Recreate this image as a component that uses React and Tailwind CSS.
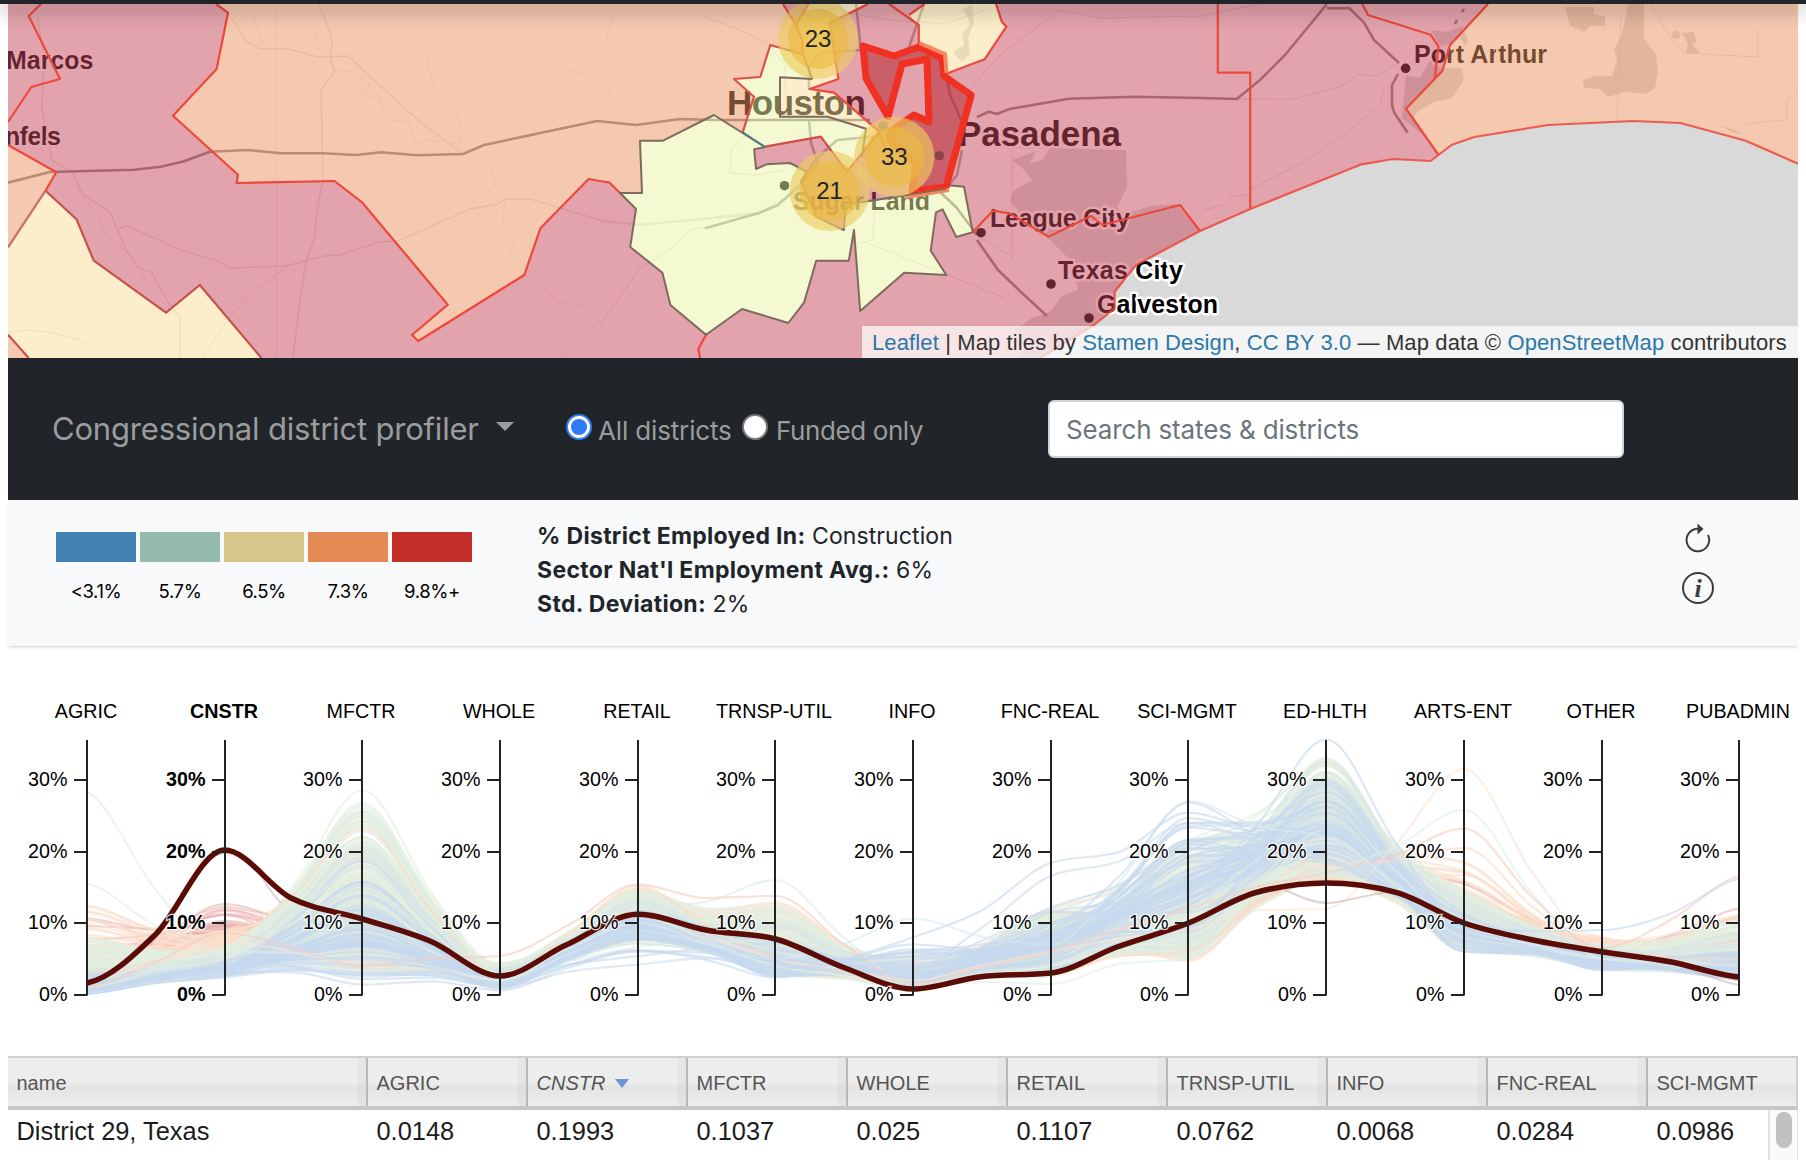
import React from "react";

const SANS = "font-['Liberation_Sans',Arial,sans-serif]";

/* ------------------------------- map ------------------------------- */

const FILL = {
  rose: "#c8485a",
  peach: "#eb9362",
  cream: "#fadd98",
  lime: "#e9f3a3",
};

const coast =
  "1040,358 1094,325 1114.7,308.3 1114.7,291.7 1136,265 1200,231 1250.2,209 1360.4,164.7 1393,159 1430.7,161 1438.5,155";
const gulfCoast = "1438.5,155 1452,144.7 1474.4,137 1548,125 1633,121 1680.4,123 1745.7,140.7 1798,163.7";
const westEdge =
  "216,4 228,12.7 216.6,69 173,115.7 238,174.7 236.5,183 334.5,181 362.4,202.7 447.8,304.7 412,335 418.3,341 524.3,275 540.4,228.3 588.6,179 600,181 609.6,182.7 620,193";
const limeSouth =
  "642,193 640,140.7 663,140.7 714,115 765,147 754.2,149.3 756,169 766.5,164.3 790,163 806.7,171.7 801,181.7 816,216.7 843.8,230 846,205 864,201.7 946,189 945.6,185 964,186.7 972.7,232.3 956.3,237 942.5,209.3 936,212.3 930.7,250.7 946.3,275 904.2,272.7 860.2,311 854,230 848.8,260.7 816.2,260.7 804,302.7 788.3,323 742,309 706,334.7 670.4,305 662.4,272.7 630.2,247 636,209 620,193";
const limeNorth =
  "770.3,45 803,54.3 812.4,79 780,77.3 780,116.7 827.7,116.7 866,128.7 862,157 845,172 820.8,136.7 765.3,146.7 742.7,132.3 754,96.7 734,79 760.3,77";
const creamCity =
  "808.6,4 796,25 802,40 803,54.3 812.4,79 780,77.3 780,116.7 827.7,116.7 866,128.7 862,157 847,171.7 879.4,131.7 834,92.7 809.7,89 838.4,79 829.6,23 868,4";
const creamNorth =
  "924.5,4 909,15 918.8,25 918.8,45 944.4,56 945.6,74 984.6,59.3 1006.4,26.7 1001.8,21.7 996,4";
const creamWest = "45.5,190.7 76.5,219.3 93.8,260.7 166,312.7 199.8,285 261.4,358 28.7,358 8,334.7 8,247.3";
const selected =
  "M863 46 894 56 918.8 47 942 58 944 76 971.2 95 946 187 912 191 915.7 163 889 140 891 131 913.8 115 929 121.7 927 59 902 64 888 116.7 866 78.3Z";

const roseArea =
  "M8 4H216L228 12.7 216.6 69 173 115.7 238 174.7 236.5 183 334.5 181 362.4 202.7 447.8 304.7 412 335 418.3 341 524.3 275 540.4 228.3 588.6 179 609.6 182.7 620 193 636 209 630.2 247 662.4 272.7 670.4 305 706 334.7 742 309 788.3 323 804 302.7 816.2 260.7 848.8 260.7 854 230 860.2 311 904.2 272.7 946.3 275 930.7 250.7 936 212.3 942.5 209.3 956.3 237 972.7 232.3 964 186.7 945.6 185 971.2 95 945.6 74 984.6 59.3 1006.4 26.7 1001.8 21.7 996 4H1488L1450 45 1442.3 71 1406 108.7 1438.5 155 1430.7 161 1393 159 1360.4 164.7 1250.2 209 1200 231 1136 265 1114.7 291.7 1114.7 308.3 1094 325 1040 358H261.4L199.8 285 166 312.7 93.8 260.7 76.5 219.3 45.5 190.7 56.3 172.3 8 145Z";

const CITIES = [
  { name: "Marcos", x: 6, y: 69.3, w: 87.5, s: 25 },
  { name: "nfels", x: 5, y: 145, w: 56, s: 25 },
  { name: "Houston", x: 727, y: 115, w: 139, s: 35 },
  { name: "Pasadena", x: 958, y: 145.7, w: 163, s: 35 },
  { name: "Sugar Land", x: 793, y: 210, w: 137, s: 25 },
  { name: "League City", x: 990, y: 227, w: 140, s: 25 },
  { name: "Texas City", x: 1058, y: 278.7, w: 125, s: 25 },
  { name: "Galveston", x: 1097, y: 313.3, w: 121, s: 25 },
  { name: "Port Arthur", x: 1414, y: 62.7, w: 133, s: 25 },
];
const DOTS = [[784.5, 185.7], [981, 232.7], [1051, 284], [1089, 318], [1405.6, 68.3]];
const CLUSTERS = [
  { n: 23, x: 818, y: 39 },
  { n: 33, x: 894.3, y: 156.7 },
  { n: 21, x: 829.6, y: 191 },
];

function DistrictMap() {
  return (
    <svg className="block h-full w-full" viewBox="8 4 1790 354">
      <rect x="8" y="4" width="1790" height="354" fill="#fff" />
      {/* water */}
      <polygon points={`${coast} ${gulfCoast} 1798,358`} fill="#d9d9d9" />
      <g fill="#d9d9d9">
        <path d="M1012 160 1036 151 1030 163 1042 160 1050 148 1126 150 1127 187 1117 208 1125 214 1150 206 1176 204 1200 231 1136 265 1115 292 1115 308 1094 325 1040 358H1018L1026 340 1015 330 1032 318 1050 312 1062 296 1078 290 1072 262 1050 240 1020 213 1010 201 1014 190 1032 180 1024 170Z" />
        <path d="M955 50 964 46 962 34 970 24 966 14 962 10 972 4 974 22 968 38 970 54 962 62 954 54Z" />
        <path d="M1406 75 1420 78 1430 60 1440 68 1462 68 1464 80 1452 98 1434 102 1420 110 1414 116 1424 136 1402 118Z" />
        <path d="M1431 30 1448 32 1462 26 1468 40 1466 46 1460 38 1450 44 1440 46Z" />
        <path d="M1565 7H1594L1594 14 1605 16 1605 26 1590 26 1584 32 1570 26Z" />
        <path d="M1628 4H1644L1644 38 1656 55 1658 72 1655 88 1646 94 1625 92 1608 97 1600 89 1584 88 1583 80 1596 76 1612 76 1617 60 1614 50 1622 34Z" />
        <circle cx="1676" cy="35" r="4" />
        <path d="M1682 33 1694 32 1697 42 1692 44 1700 53 1686 53 1688 44Z" />
        <path d="M1720 125 1742 133 1740 134 1732 132Z" />
      </g>
      {/* minor roads and streams */}
      <g fill="none" stroke="#b9b3b0" strokeWidth="1" opacity=".4">
        <path d="M231 17 247 42 260 49H288L318 57 348 56 365 72 420 122 462 153" strokeWidth="1.3" />
        <path d="M319 4 332 38 331 62 335 71 321 90 323 180 318 205 314 240 306 262 300 300 293 358" strokeWidth="1.3" />
        <path d="M37 12 44 60 42 108 52 160 72 172 84 195 110 212 121 238 126 250 138 268 151 272 168 302 180 318V358" strokeWidth="1.3" />
        <path d="M120 228 128 226 180 250 218 261 230 268 286 266 325 256 340 255 380 242 398 241 470 209 498 204 506 199H530L600 220 640 225 760 214" strokeWidth="1.3" />
        <path d="M288 266 264 284 234 312 202 358M8 333 24 330 50 332 80 340 100 358" />
        <g opacity=".6">
          <path d="M240 20 252 12 258 30 262 43 272 34 282 43 296 34 300 41 316 34 318 48 328 52 334 70 352 72 370 85 362 95 380 97 382 110 390 120 408 122 416 143 430 140 458 144 462 134 456 110 440 98 432 80 425 50" />
          <path d="M474 155 488 164 496 185 486 195 505 205 502 225 514 245 508 260 525 275 540 285 548 290 556 302 580 305 600 320 575 340 564 358" />
          <path d="M72 180 86 200 98 214 104 234 120 246 138 262 144 280 156 300 M186 190 190 196M536 50 560 68 580 74 600 82" />
          <path d="M277 4V358M604 4 612 20 606 40 618 58 604 80 610 95 622 104" />
        </g>
        <path d="M700 15 740 30 766 42 785 65 786 112M784 170 757 175 730 173 731 150 752 130M600 222 640 224 668 222 760 212 800 190M600 325 640 268 672 248 690 230 720 225" />
        <path d="M860 15 890 20 945 24 985 10M966 95 986 70 1000 55 1060 10 1100 18 1200 16 1260 4M870 244 1005 298M856 244 873 240 875 195M1043 148H1012V260M960 226 1010 255" />
        <path d="M1228 99H1294L1342 86 1358 74 1376 76 1396 64M1250 190 1310 158 1350 130 1380 105 1384 90M1204 210 1224 205 1232 196 1250 195" />
        <path d="M1621 14 1617 124M1650 4 1660 18 1664 28 1684 53 1758 57V28M1798 90 1786 100 1787 120 1760 122 1740 126" />
      </g>
      {/* main roads */}
      <g fill="none" stroke="#8c8583" strokeWidth="2.6" strokeLinejoin="round">
        <path d="M8 182.7 50 172 134 169.7 161 166.7 184 161.3 210 151.7 248 150 281 153.3H323L356 155 381 152.3 417 155.3 463 154 484 145 597 121 636 125 680 119 715 120H870" />
        <path d="M977 117 989 111.7 997 114 1009.5 109 1069 98.7 1136 96.7 1200 98 1236.7 99 1260 80 1285 55 1327 4M1327 8.3H1349.6L1364 22.7 1374 40 1399 63M1398 74 1392 85V105L1394.4 113 1407.6 132.7" />
        <g opacity=".75">
          <path d="M856 4 861 50 820 52.7 809 66V90M809 120 811 143 818 163 800 185M705 228.3 759 213 778 205 800 185 815 160 837 140 881 136M924 4 908 50M962 150 957 175 945 190M945 70 950 95 962 122" />
        </g>
        <path d="M941 193 956 207 977 235M977 240 998 270 1021 292 1047 316" />
        <path d="M1462 12 1464 9M1455 24 1457 20" />
      </g>
      {/* place names */}
      <g fill="#000">
        {DOTS.map(([x, y]) => (
          <circle key={x} cx={x} cy={y} r="4.8" />
        ))}
        {CITIES.map((c) => (
          <text
            key={c.name}
            x={c.x}
            y={c.y}
            fontSize={c.s}
            textLength={c.w}
            fontWeight="700"
            stroke="#fff"
            strokeWidth="5"
            strokeLinejoin="round"
            paintOrder="stroke"
            className={SANS}
          >
            {c.name}
          </text>
        ))}
      </g>
      {/* district fills */}
      <g fillOpacity=".5">
        <path fill={FILL.rose} d={roseArea} />
        <polygon points="8,145 56.3,172.3 45.5,190.7 8,247.3" fill={FILL.peach} />
        <polygon points="8,334.7 28.7,358 8,358" fill={FILL.peach} />
        <polygon points={creamWest} fill={FILL.cream} />
        <polygon
          points={`${westEdge} 642,193 640,140.7 663,140.7 714,115 742.7,132.3 754,96.7 734,79 760.3,77 770.3,45 803,54.3 796,25 783,4`}
          fill={FILL.peach}
        />
        <polygon points={limeNorth} fill={FILL.lime} />
        <polygon points={limeSouth} fill={FILL.lime} />
        <polygon points={creamCity} fill={FILL.cream} />
        <polygon points={creamNorth} fill={FILL.cream} />
        <polygon points="783,4 808.6,4 796,25" fill={FILL.rose} />
        <path
          fill={FILL.rose}
          d="M868 4H924.5L909 15 918.8 25V45L944.4 56 945.6 74 971.2 95 946 189 864 201.7 846 205 843.8 230 816 216.7 801 181.7 806.7 171.7 790 163 766.5 164.3 756 169 754.2 149.3 820.8 136.7 847 171.7 879.4 131.7 834 92.7 809.7 89 838.4 79 829.6 23Z"
        />
        <polygon
          points={`1488,4 1450,45 1442.3,71 1406,108.7 ${gulfCoast} 1798,4`}
          fill={FILL.peach}
        />
      </g>
      {/* district borders */}
      <g fill="none" stroke="#ec483b" strokeWidth="2.2" strokeLinejoin="round">
        <polyline points="41,4 28.7,16 60,79 31.4,87 8,122" />
        <polyline points={westEdge} />
        <polyline points="8,145 56.3,172.3 45.5,190.7" />
        <polyline points="45.5,190.7 8,247.3" stroke="#c7706a" />
        <polyline points="45.5,190.7 76.5,219.3 93.8,260.7 166,312.7 199.8,285 261.4,358" stroke="#c8504a" />
        <polyline points="8,334.7 28.7,358" stroke="#c8504a" />
        <polyline points="808.6,4 796,25" />
        <polyline points="803,54.3 802,40 796,25 783,4" />
        <polyline points="847,171.7 879.4,131.7 834,92.7 809.7,89 838.4,79 829.6,23 868,4" />
        <polyline
          points="803,54.3 770.3,45 760.3,77 734,79 754,96.7 742.7,132.3"
          stroke="#dc5045"
        />
        <polyline points="765.3,146.7 820.8,136.7 847,171.7" stroke="#d54a45" />
        <polyline points="879.4,131.7 885,150" />
        <polyline points="889,4 918.8,25 918.8,45" />
        <polyline points="924.5,4 909,15" />
        <polyline points="945.6,74 984.6,59.3 1006.4,26.7 1001.8,21.7 996,4" />
        <polyline points={coast} opacity=".85" />
        <polyline points={gulfCoast} opacity=".85" />
        <polyline points="1488,4 1450,45 1442.3,71 1406,108.7 1438.5,155" />
        <polyline points="1362.3,4 1368,15 1430.7,34.7 1438.5,46.7 1434.6,78.3" />
        <polyline points="1217.8,4 1217.8,72.7 1250.2,72.7 1250.2,209" />
        <polyline points="972.7,232.3 993,210.7 1009.5,213.3 1048.5,236.7 1091,216 1102.5,225 1180,205 1200,231" />
        <polyline points="706,334.7 698.4,348.7 700,358" />
      </g>
      <g fill="none" stroke="#7f6a5f" strokeWidth="2" strokeLinejoin="round">
        <polygon points={limeSouth} />
        <polyline points="812.4,79 780,77.3 780,116.7 827.7,116.7 866,128.7 862,157" />
        <polyline points="803,54.3 812.4,79" />
      </g>
      <path d="M742.7 132.3 765 147" stroke="#4a7f86" strokeWidth="2" />
      {/* selected district */}
      <path d={selected} fill="#b01520" fillOpacity=".48" stroke="#f03122" strokeWidth="7" strokeLinejoin="round" />
      <path d="M919.5 43 945 54 946.5 73M906 197 949 190" fill="none" stroke="#f48a62" strokeWidth="4" />
      <path d="M864 201.7 946 189" stroke="#7f6a5f" strokeWidth="1.6" />
      <g fill="#000" fillOpacity=".3">
        <circle cx="883" cy="125.7" r="4.8" />
        <circle cx="939.4" cy="155.7" r="4.8" />
      </g>
      {CLUSTERS.map((c) => (
        <g key={c.n}>
          <circle cx={c.x} cy={c.y} r="40" fill="#edcc62" fillOpacity=".65" />
          <circle cx={c.x} cy={c.y} r="30" fill="#ebbb3e" fillOpacity=".6" />
          <text x={c.x} y={c.y + 8} fontSize="24" fill="#212529" textAnchor="middle" className={SANS}>
            {c.n}
          </text>
        </g>
      ))}
    </svg>
  );
}

/* ----------------------- parallel coordinates ---------------------- */

const AXES = [
  "AGRIC", "CNSTR", "MFCTR", "WHOLE", "RETAIL", "TRNSP-UTIL", "INFO",
  "FNC-REAL", "SCI-MGMT", "ED-HLTH", "ARTS-ENT", "OTHER", "PUBADMIN",
];
const axisX = (i) => 87 + 137.7 * i;
const valueY = (v) => 994.6 - 7.16 * v;

function monotonePath(pts) {
  const n = pts.length;
  const d = [];
  for (let i = 0; i < n - 1; i++) d.push((pts[i + 1][1] - pts[i][1]) / (pts[i + 1][0] - pts[i][0]));
  const m = pts.map((_, i) => {
    if (i === 0) return d[0] * 0.3;
    if (i === n - 1) return d[n - 2] * 0.4;
    const a = d[i - 1];
    const b = d[i];
    if (a * b <= 0) return 0;
    return Math.sign(a) * Math.min(Math.abs(a) * 2, Math.abs(b) * 2, Math.abs(a + b) / 2);
  });
  let s = `M${pts[0][0].toFixed(1)} ${pts[0][1].toFixed(1)}`;
  for (let i = 0; i < n - 1; i++) {
    const h = (pts[i + 1][0] - pts[i][0]) / 3;
    s += `C${(pts[i][0] + h).toFixed(1)} ${(pts[i][1] + m[i] * h).toFixed(1)} ${(pts[i + 1][0] - h).toFixed(1)} ${(pts[i + 1][1] - m[i + 1] * h).toFixed(1)} ${pts[i + 1][0].toFixed(1)} ${pts[i + 1][1].toFixed(1)}`;
  }
  return s;
}

const ACTIVE = monotonePath([
  [87.2, 983], [155, 935], [224.5, 850], [291, 898], [362.4, 919], [430, 941], [500, 976],
  [566, 945], [638, 914.3], [706, 930], [775.5, 939], [845, 968], [913, 989], [981, 976.7],
  [1051, 973], [1117, 947], [1188.6, 923], [1256, 892.5], [1326.3, 883], [1396, 892.3],
  [1464, 923], [1533, 940], [1601.7, 951.7], [1670, 961.7], [1739, 977],
]);

/* low / centre / high share of employment for each sector */
const GROUPS = [
  {
    color: "#e9b3b3", count: 24,
    r: [[1, 4, 11], [8.6, 9.8, 12.8], [3, 7, 12], [1.8, 2.4, 4], [9, 12, 14], [4, 6, 11], [0.6, 1.3, 2.5], [3, 5, 8], [6, 9, 14], [15.5, 19, 22], [8, 11, 17], [4.5, 6, 8.2], [2.5, 5, 12.5]],
  },
  {
    color: "#fbddca", count: 80,
    r: [[0.8, 3.5, 13.2], [6.3, 7.2, 9], [3, 9, 21], [1.5, 2.5, 3.8], [8.5, 11.6, 15], [2.6, 5, 13], [0.8, 1.7, 4.5], [2.5, 6, 12], [4.6, 9, 19], [16, 20, 29], [6, 10.5, 18.5], [4, 5.5, 8], [2, 4.5, 11.5]],
  },
  {
    color: "#e3efe0", count: 200,
    r: [[0.4, 2.6, 8], [4.3, 5.4, 6.8], [3, 13, 27], [1, 2.6, 4.4], [7, 11.2, 14.6], [2.8, 5, 12.5], [0.8, 2, 4.5], [2.5, 6, 12], [5, 10.5, 22], [16.5, 24, 33.5], [6, 9, 14.5], [3.8, 5, 7], [2.2, 4.5, 10.5]],
  },
  {
    color: "#d9e6e6", count: 60,
    r: [[0.3, 1.6, 4], [3, 4.4, 5.6], [3, 10, 23], [0.9, 2.3, 3.8], [6.5, 10.4, 13.5], [2.5, 4.8, 10], [1, 2.3, 5.5], [3, 6.5, 11.5], [6, 13.5, 24], [17, 25, 33.5], [6, 8.8, 14], [3.5, 4.8, 6.8], [2, 4.3, 9]],
  },
  {
    color: "#c7d8ee", count: 48,
    r: [[0.1, 0.9, 3], [2.4, 3.8, 4.8], [2, 7.5, 19], [0.7, 2, 3.2], [5, 9.5, 12], [2.3, 4.6, 8], [1.2, 2.6, 7.5], [3.5, 7, 12.5], [8, 15.5, 25], [17.5, 23, 30], [6, 8.4, 12], [3.2, 4.5, 6], [2, 3.8, 6]],
  },
];

const SINGLES = [
  ["#dfeeea", [28.3, 5.3, 18, 3, 10, 4, 1, 4, 8, 20, 9, 5, 4]],
  ["#e6efdc", [15.5, 6, 15, 3, 11, 5, 1.5, 3, 7, 22, 8, 5, 5]],
  ["#e3efe0", [2, 5, 28.5, 3, 11, 4, 1, 4, 8, 23, 8, 5, 3]],
  ["#dcebe6", [1, 5, 25.6, 2.6, 12, 16, 1.4, 6, 12, 26, 9, 5, 4]],
  ["#fbd9c4", [3, 7, 23.2, 2.5, 15.2, 5, 1, 3, 6, 18, 20.5, 6, 5]],
  ["#fbe4d3", [2, 7.4, 4, 2, 12, 5, 2, 6, 9, 12, 31.5, 6.2, 4]],
  ["#e0eee4", [1, 6, 5, 2, 12, 6, 1, 1.5, 5, 17, 25.8, 5, 4]],
  ["#f5cdc2", [1, 8.6, 4, 5.4, 15.4, 13.8, 1.5, 6, 12, 17, 23.2, 6.5, 16.6]],
  ["#c7d8ee", [0.2, 2.4, 2.8, 1.2, 6.2, 2.4, 8, 18.4, 25.4, 23, 8, 4.6, 6]],
  ["#cbdcec", [0.2, 2.6, 3, 1, 4.2, 5, 4, 16.6, 24, 20, 9, 5, 5]],
  ["#dbe9ee", [0.3, 3, 5, 2, 9, 5, 10.6, 7, 27, 22, 9, 5, 4]],
  ["#c7d8ee", [0.4, 3.2, 1.4, 0.6, 6, 3.6, 6, 9, 26.8, 19, 8.8, 4, 3]],
  ["#c7d8ee", [0.4, 3, 6, 1.4, 9, 4, 3, 8, 14, 35.6, 9, 4.4, 4]],
  ["#c7d8ee", [0.4, 3.8, 5, 1.2, 8, 5, 3, 8, 21, 19, 9.6, 9, 16.2]],
];

function buildContext() {
  let seed = 20177;
  const rnd = () => {
    seed = (seed * 1664525 + 1013904223) % 4294967296;
    return seed / 4294967296;
  };
  const lines = [];
  const centre = AXES.map((_, i) => (GROUPS[2].r[i][1] + GROUPS[4].r[i][1]) / 2);
  const trace = (vals) => {
    const pts = [];
    vals.forEach((v, i) => {
      pts.push([axisX(i), valueY(v)]);
      if (i < vals.length - 1) {
        const mean = (v + vals[i + 1]) / 2;
        const c = (centre[i] + centre[i + 1]) / 2;
        pts.push([axisX(i) + 68.8, valueY(mean * 0.84 + c * 0.16)]);
      }
    });
    return monotonePath(pts);
  };
  GROUPS.forEach((g) => {
    for (let k = 0; k < g.count; k++) {
      const vals = g.r.map(([lo, mid, hi]) => {
        const t = rnd();
        const spread = Math.pow(rnd(), 1.9);
        return t < 0.5 ? mid - (mid - lo) * spread : mid + (hi - mid) * spread;
      });
      lines.push({ d: trace(vals), color: g.color });
    }
  });
  SINGLES.forEach(([color, vals]) => lines.push({ d: trace(vals), color }));
  return lines;
}
const CONTEXT = buildContext();

function ParallelChart() {
  return (
    <svg className="block h-[410px] w-full" viewBox="8 646 1790 410">
      <g fill="none" strokeWidth="2.2" strokeOpacity=".6">
        {CONTEXT.map((l, i) => (
          <path key={i} d={l.d} stroke={l.color} />
        ))}
        <path d="M150 945C180 905 195 853 226 853S258 880 281 903" stroke="#cfb6ba" />
        <path d="M1285 890C1305 899 1316 903 1328 903S1360 896 1388 892" stroke="#cfb6ba" />
        <path d="M1680 966C1700 972 1722 983 1739 985" stroke="#cfb6ba" />
      </g>
      <path d={ACTIVE} fill="none" stroke="#5b0c07" strokeWidth="5.5" />
      {AXES.map((name, i) => {
        const x = Math.floor(axisX(i) + 0.35);
        const weight = i === 1 ? 700 : 400;
        return (
          <g key={name} className={SANS} fontSize="19.7" fontWeight={weight} fill="#000">
            <path
              d={`M${x} 740V995.5M${x - 13} 780H${x}M${x - 13} 852H${x}M${x - 13} 923H${x}M${x - 13} 995H${x}`}
              stroke="#222"
              strokeWidth="2"
            />
            {[30, 20, 10, 0].map((v) => (
              <text
                key={v}
                x={x - 19.5}
                y={valueY(v) + 6.3}
                textAnchor="end"
                stroke="#fff"
                strokeWidth="2.5"
                strokeOpacity=".8"
                paintOrder="stroke"
              >
                {v}%
              </text>
            ))}
            <text x={x - 1} y="717.5" textAnchor="middle">
              {name}
            </text>
          </g>
        );
      })}
    </svg>
  );
}

/* ----------------------------- controls ---------------------------- */

function Radio({ checked }) {
  return (
    <span
      className={`-mt-1 flex size-[26px] shrink-0 items-center justify-center rounded-full border-2 bg-white ${checked ? "border-[#2f7bf6]" : "border-[#767676]"}`}
    >
      {checked && <span className="size-4 rounded-full bg-[#2f7bf6]" />}
    </span>
  );
}

function Toolbar() {
  return (
    <div className="flex h-[142px] items-center bg-[#212529] pl-[44px] font-[Inter,sans-serif] text-[#9b9c9e]">
      <div className="flex w-[514px] items-center">
        <span className="whitespace-nowrap text-[31px] tracking-[-0.19px]">Congressional district profiler</span>
        <span className="-mt-1.5 ml-[17px] border-x-[9px] border-t-[9px] border-x-transparent border-t-[#9b9c9e]" />
      </div>
      <div className="flex w-[482px] items-center whitespace-nowrap text-[26px] tracking-[-0.15px]">
        <Radio checked />
        <span className="ml-[6px] mt-[3px] w-[138px]">All districts</span>
        <span className="ml-[6px] flex"><Radio /></span>
        <span className="ml-[8px] mt-[3px] tracking-[-0.4px]">Funded only</span>
      </div>
      <div className="flex h-[58px] w-[576px] items-center rounded-md border-2 border-[#ced4da] bg-white pl-4 text-[26px] tracking-[-0.15px] text-[#6c757d]">
        Search states &amp; districts
      </div>
    </div>
  );
}

const LEGEND = [
  ["bg-[#4281b4]", "<3.1%"],
  ["bg-[#94bbad]", "5.7%"],
  ["bg-[#d8c78c]", "6.5%"],
  ["bg-[#e48a55]", "7.3%"],
  ["bg-[#c52f29]", "9.8%+"],
];
const FACTS = [
  ["% District Employed In:", "Construction"],
  ["Sector Nat'l Employment Avg.:", "6%"],
  ["Std. Deviation:", "2%"],
];

function SummaryPanel() {
  return (
    <div className="flex h-[146px] bg-[#f8f9fb] pl-12 font-[Inter,sans-serif] shadow-[0_2px_3px_-1px_rgba(0,0,0,0.2)]">
      <div className="flex w-[482px] gap-1 pt-8">
        {LEGEND.map(([bg, label]) => (
          <div key={label} className="w-20 text-center text-[18.5px] leading-6 tracking-[-0.4px] text-black">
            <div className={`mb-[17px] h-[30px] ${bg}`} />
            {label}
          </div>
        ))}
      </div>
      <div className="w-[1144px] pt-[19px] text-[23px] leading-[34px] text-[#212529]">
        {FACTS.map(([label, value]) => (
          <div key={label} className="-ml-px whitespace-nowrap tracking-[0.1px]">
            <b className="font-bold tracking-[0.32px]">{label}</b> {value}
          </div>
        ))}
      </div>
      <svg className="mt-5 h-[90px] w-9" viewBox="0 0 36 90" fill="none" stroke="#3c3c3c" strokeWidth="2">
        <path d="M16 8.7A11.3 11.3 0 1 0 26 15" />
        <path d="M15.5 3.5 21.5 9 15.5 14.5Z" fill="#3c3c3c" stroke="none" />
        <circle cx="16" cy="68" r="15" />
        <text x="16" y="76.5" textAnchor="middle" fontSize="26" fontStyle="italic" fontWeight="700" fill="#3c3c3c" stroke="none" className="font-['Liberation_Serif',serif]">
          i
        </text>
      </svg>
    </div>
  );
}

/* ------------------------------- table ----------------------------- */

const COLUMNS = [
  ["name", "District 29, Texas"],
  ["AGRIC", "0.0148"],
  ["CNSTR", "0.1993"],
  ["MFCTR", "0.1037"],
  ["WHOLE", "0.025"],
  ["RETAIL", "0.1107"],
  ["TRNSP-UTIL", "0.0762"],
  ["INFO", "0.0068"],
  ["FNC-REAL", "0.0284"],
  ["SCI-MGMT", "0.0986"],
];
const GRID = "grid grid-cols-[360px_repeat(8,160px)_150px]";

function DistrictTable() {
  return (
    <div className={SANS}>
      <div
        className={`${GRID} h-[54px] border-b-4 border-r-2 border-t-2 border-b-[#c6c6c6] border-r-[#d0d0d0] border-t-[#cfcfcf] bg-gradient-to-b from-[#ededed] from-50% via-[#e4e4e4] via-60% to-[#eeeeee] text-[20px] text-[#555]`}
      >
        {COLUMNS.map(([name], i) => (
          <div
            key={name}
            className={`flex items-center whitespace-nowrap pl-[8.5px] pt-0.5 ${i < 9 ? "border-r-2 border-[#b8b8b8] shadow-[inset_-8px_0_0_rgba(0,0,0,0.03)]" : ""} ${i === 2 ? "italic" : ""}`}
          >
            {name}
            {i === 2 && (
              <span className="ml-2.5 border-x-[7px] border-t-[9px] border-x-transparent border-t-[#6b93d6]" />
            )}
          </div>
        ))}
      </div>
      <div className="flex h-[50px] justify-between">
        <div className={`${GRID} pt-0.5 text-[25.4px] leading-[38px] text-[#1c1c1c]`}>
          {COLUMNS.map(([name, value]) => (
            <div key={name} className="whitespace-nowrap pl-[8.5px]">
              {value}
            </div>
          ))}
        </div>
        <div className="-ml-[30px] w-[30px] border-l-2 border-r border-[#e3e3e3] bg-[#fafafa] pl-1.5 pt-0.5">
          <div className="h-9 w-4 rounded-full bg-[#c1c1c1]" />
        </div>
      </div>
    </div>
  );
}

export default function App() {
  return (
    <div className="h-[1160px] w-[1806px] overflow-hidden bg-white">
      <div className="relative z-10 h-1 bg-[#212529] shadow-[0_4px_20px_2px_rgba(0,0,0,0.38)]" />
      <div className="mx-2">
        <div className="relative h-[354px] overflow-hidden">
          <DistrictMap />
          <div
            className={`absolute bottom-0 right-0 flex h-8 w-[936px] items-center whitespace-pre bg-white/70 pl-[10px] text-[22px] tracking-[0.12px] text-[#333] ${SANS}`}
          >
            <span className="text-[#2a79a8]">Leaflet</span> | Map tiles by{" "}
            <span className="text-[#2a79a8]">Stamen Design</span>,{" "}
            <span className="text-[#2a79a8]">CC BY 3.0</span> — Map data ©{" "}
            <span className="text-[#2a79a8]">OpenStreetMap</span> contributors
          </div>
        </div>
        <Toolbar />
        <SummaryPanel />
        <ParallelChart />
        <DistrictTable />
      </div>
    </div>
  );
}
